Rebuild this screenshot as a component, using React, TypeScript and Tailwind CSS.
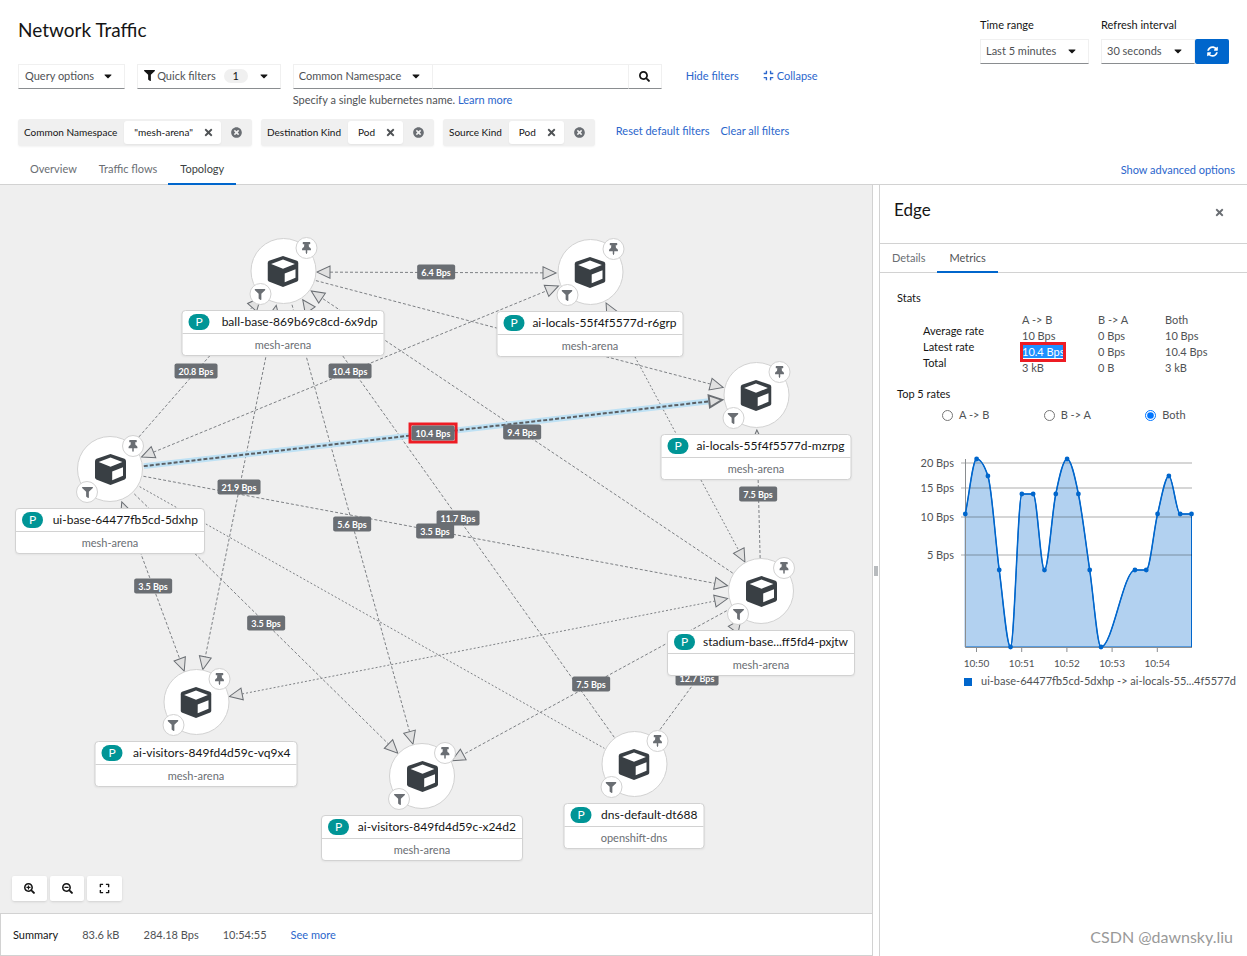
import { useState } from 'react';
import type { ReactNode } from 'react';
import {
  FaCaretDown,
  FaCompress,
  FaExpand,
  FaFilter,
  FaSearch,
  FaSearchMinus,
  FaSearchPlus,
  FaSyncAlt,
  FaThumbtack,
  FaTimes,
  FaTimesCircle,
} from 'react-icons/fa';

interface PodNode {
  id: string;
  name: string;
  namespace: string;
  x: number;
  y: number;
  width: number;
}

interface Edge {
  from: string;
  to: string;
  label?: string;
  both?: boolean;
  noArrow?: boolean;
  dotted?: boolean;
  selected?: boolean;
}

const nodes: PodNode[] = [
  { id: 'ball', name: 'ball-base-869b69c8cd-6x9dp', namespace: 'mesh-arena', x: 283, y: 87, width: 203 },
  { id: 'r6grp', name: 'ai-locals-55f4f5577d-r6grp', namespace: 'mesh-arena', x: 590, y: 88, width: 187 },
  { id: 'mzrpg', name: 'ai-locals-55f4f5577d-mzrpg', namespace: 'mesh-arena', x: 756, y: 211, width: 191 },
  { id: 'ui', name: 'ui-base-64477fb5cd-5dxhp', namespace: 'mesh-arena', x: 110, y: 285, width: 190 },
  { id: 'stadium', name: 'stadium-base...ff5fd4-pxjtw', namespace: 'mesh-arena', x: 761, y: 407, width: 188 },
  { id: 'vq9x4', name: 'ai-visitors-849fd4d59c-vq9x4', namespace: 'mesh-arena', x: 196, y: 518, width: 203 },
  { id: 'x24d2', name: 'ai-visitors-849fd4d59c-x24d2', namespace: 'mesh-arena', x: 422, y: 592, width: 202 },
  { id: 'dns', name: 'dns-default-dt688', namespace: 'openshift-dns', x: 634, y: 580, width: 141 },
];

const edges: Edge[] = [
  { from: 'ball', to: 'r6grp', label: '6.4 Bps', both: true },
  { from: 'ball', to: 'mzrpg' },
  { from: 'ui', to: 'r6grp', label: '10.4 Bps', both: true },
  { from: 'ui', to: 'ball', label: '20.8 Bps' },
  { from: 'ball', to: 'vq9x4', label: '21.9 Bps', both: true },
  { from: 'ball', to: 'x24d2', label: '5.6 Bps' },
  { from: 'stadium', to: 'ball', label: '9.4 Bps' },
  { from: 'r6grp', to: 'stadium', both: true, dotted: true },
  { from: 'stadium', to: 'mzrpg', label: '7.5 Bps' },
  { from: 'ui', to: 'stadium', label: '3.5 Bps' },
  { from: 'dns', to: 'ball', label: '11.7 Bps' },
  { from: 'vq9x4', to: 'stadium', both: true, dotted: true },
  { from: 'ui', to: 'x24d2', label: '3.5 Bps' },
  { from: 'ui', to: 'vq9x4', label: '3.5 Bps', both: true },
  { from: 'stadium', to: 'x24d2', label: '7.5 Bps' },
  { from: 'dns', to: 'stadium', label: '12.7 Bps' },
  { from: 'ui', to: 'dns', noArrow: true, dotted: true },
  { from: 'ui', to: 'mzrpg', label: '10.4 Bps', selected: true },
];

const NODE_RADIUS = 34;
const ARROW_LENGTH = 13;

const findNode = (id: string) => nodes.find((n) => n.id === id)!;

function Arrow({ x, y, angle, selected }: { x: number; y: number; angle: number; selected?: boolean }) {
  return (
    <path
      d={`M0 0L-${ARROW_LENGTH} -6V6Z`}
      transform={`translate(${x} ${y}) rotate(${angle})`}
      fill="#e0e0e0"
      stroke="#6a6e73"
      strokeWidth={selected ? 2 : 1}
    />
  );
}

function EdgeLine({ edge }: { edge: Edge }) {
  const a = findNode(edge.from);
  const b = findNode(edge.to);
  const length = Math.hypot(b.x - a.x, b.y - a.y);
  const ux = (b.x - a.x) / length;
  const uy = (b.y - a.y) / length;
  const angle = (Math.atan2(uy, ux) * 180) / Math.PI;
  const startGap = NODE_RADIUS + (edge.both ? ARROW_LENGTH : 0);
  const endGap = NODE_RADIUS + (edge.noArrow ? 0 : ARROW_LENGTH);
  const line = {
    x1: a.x + ux * startGap,
    y1: a.y + uy * startGap,
    x2: b.x - ux * endGap,
    y2: b.y - uy * endGap,
  };

  return (
    <g>
      {edge.selected && <line {...line} stroke="#bee1f4" strokeWidth={6} />}
      <line
        {...line}
        stroke={edge.selected ? '#5b5f63' : '#7d8084'}
        strokeWidth={edge.selected ? 2 : 1}
        strokeDasharray={edge.dotted ? '2 2' : edge.selected ? '4 2' : '3 2'}
      />
      {!edge.noArrow && (
        <Arrow x={b.x - ux * NODE_RADIUS} y={b.y - uy * NODE_RADIUS} angle={angle} selected={edge.selected} />
      )}
      {edge.both && <Arrow x={a.x + ux * NODE_RADIUS} y={a.y + uy * NODE_RADIUS} angle={angle + 180} />}
    </g>
  );
}

function EdgeLabel({ edge }: { edge: Edge }) {
  const a = findNode(edge.from);
  const b = findNode(edge.to);
  return (
    <div
      className={`absolute -translate-x-1/2 -translate-y-1/2 ${edge.selected ? 'border-3 border-[#ed1c24]' : ''}`}
      style={{ left: Math.floor((a.x + b.x) / 2), top: Math.floor((a.y + b.y) / 2) }}
    >
      <div className="rounded-[2px] bg-[#6a6e73] px-1 text-[9px] leading-[15px] font-bold whitespace-nowrap text-white">
        {edge.label}
      </div>
    </div>
  );
}

function CubeIcon() {
  return (
    <svg width="31" height="31" viewBox="0 0 31 31" aria-hidden="true">
      <path
        d="M15.5 0 29.5 4.8Q31 5.5 31 7.2V23.3Q31 24.8 29.7 25.5L15.5 31 1.3 25.5Q0 24.8 0 23.3V7.2Q0 5.5 1.5 4.8Z"
        fill="#393f44"
      />
      <path d="M15.5 3.6 27.4 8 15.5 12.8 3.6 8Z" fill="#fff" />
      <path d="M17.2 17.4 28 13.2V21.8L17.2 26.2Z" fill="#fff" />
    </svg>
  );
}

function PodItem({ node }: { node: PodNode }) {
  return (
    <div
      className="absolute flex -translate-x-1/2 flex-col items-center gap-1.5"
      style={{ left: node.x, top: node.y - 34, width: node.width }}
    >
      <div className="relative flex size-[66px] items-center justify-center rounded-full border border-[#d2d2d2] bg-white">
        <CubeIcon />
        <span className="absolute -top-[2px] -right-[2px] flex size-[22px] items-center justify-center rounded-full border border-[#d2d2d2] bg-white">
          <FaThumbtack size={12} color="#6a6e73" />
        </span>
        <span className="absolute -bottom-[2px] -left-[2px] flex size-[22px] items-center justify-center rounded-full border border-[#d2d2d2] bg-white">
          <FaFilter size={11} color="#6a6e73" />
        </span>
      </div>
      <div className="w-full rounded-[4px] border border-[#d2d2d2] bg-white text-center shadow-xs">
        <div className="flex h-[23px] items-center justify-between border-b border-[#d2d2d2] pr-1.5 pl-1.5">
          <span className="h-4 w-[21px] rounded-full bg-[#009596] text-[12px] leading-4 text-white">P</span>
          <span className="text-[12px] whitespace-nowrap text-[#151515]">{node.name}</span>
        </div>
        <div className="leading-[21px] text-[#6a6e73]">{node.namespace}</div>
      </div>
    </div>
  );
}

function MenuButton({ children }: { children: ReactNode }) {
  return (
    <button
      type="button"
      className="flex h-[25px] items-center border border-[#f0f0f0] border-b-[#8a8d90] bg-white px-1.5 pb-0.5 text-[#4f5255]"
    >
      {children}
    </button>
  );
}

function SelectBox({ id, options, width, label }: { id: string; options: string[]; width: string; label?: string }) {
  return (
    <div className={`relative ${width}`}>
      <select
        id={id}
        aria-label={label}
        className="h-[25px] w-full appearance-none border border-[#f0f0f0] border-b-[#8a8d90] bg-white pb-0.5 pl-[5px] text-[#4f5255]"
      >
        {options.map((o) => (
          <option key={o}>{o}</option>
        ))}
      </select>
      <FaCaretDown size={12} className="pointer-events-none absolute top-1.5 right-[11px] text-[#151515]" />
    </div>
  );
}

function FilterChip({ category, value }: { category: string; value: string }) {
  return (
    <div className="flex h-[27px] items-center rounded-[3px] bg-[#f0f0f0] pl-1.5 text-[10px] text-[#151515] shadow-xs">
      <span className="pb-0.5">{category}</span>
      <span className="ml-[7px] flex h-[23px] items-center gap-2.5 rounded-[3px] bg-white pr-[7px] pl-2.5 shadow-xs">
        <span className="pb-0.5">{value}</span>
        <button type="button" aria-label={`Remove ${value}`}>
          <FaTimes size={11} color="#4f5255" />
        </button>
      </span>
      <button type="button" aria-label={`Clear ${category}`} className="px-2.5">
        <FaTimesCircle size={11} color="#6a6e73" />
      </button>
    </div>
  );
}

// slot index (15s steps) and y position of each sample
const samples: [number, number][] = [
  [0, 64], [1, 9], [2, 26], [3, 120], [4, 197], [5, 44], [6, 44], [7, 120], [8, 44], [9, 9],
  [10, 44], [11, 120], [12, 197], [15, 120], [16, 120], [17, 64], [18, 26], [19, 64], [20, 64],
];
const points = samples.map(([slot, y]) => [85.3 + slot * 11.31, y]);

// monotone cubic interpolation
function curvePath(pts: number[][]) {
  const slopes = pts.slice(1).map((p, i) => (p[1] - pts[i][1]) / (p[0] - pts[i][0]));
  const tangents = pts.map((p, i) => {
    if (i === 0) return slopes[0];
    if (i === pts.length - 1) return slopes[slopes.length - 1];
    const s0 = slopes[i - 1];
    const s1 = slopes[i];
    if (s0 * s1 <= 0) return 0;
    const h0 = p[0] - pts[i - 1][0];
    const h1 = pts[i + 1][0] - p[0];
    const mid = (s0 * h1 + s1 * h0) / (h0 + h1);
    return Math.sign(s0) * Math.min(Math.abs(s0) * 2, Math.abs(s1) * 2, Math.abs(mid));
  });
  let d = `M${pts[0][0]} ${pts[0][1]}`;
  for (let i = 1; i < pts.length; i++) {
    const [x0, y0] = pts[i - 1];
    const [x1, y1] = pts[i];
    const dx = (x1 - x0) / 3;
    d += `C${x0 + dx} ${y0 + dx * tangents[i - 1]} ${x1 - dx} ${y1 - dx * tangents[i]} ${x1} ${y1}`;
  }
  return d;
}

const yTicks = [
  { y: 13, label: '20 Bps' },
  { y: 38, label: '15 Bps' },
  { y: 67, label: '10 Bps' },
  { y: 105, label: '5 Bps' },
];
const xTicks = ['10:50', '10:51', '10:52', '10:53', '10:54'];

function RatesChart() {
  return (
    <svg viewBox="0 0 367 240" className="w-full" role="img" aria-label="Top 5 rates">
      <path d={`${curvePath(points)}V197H85.3Z`} fill="#06c" fillOpacity={0.3} stroke="#06c" strokeWidth={1} />
      {yTicks.map((t) => (
        <g key={t.label}>
          <line x1={81} x2={312} y1={t.y} y2={t.y} stroke="#151515" strokeOpacity={0.35} />
          <text x={74} y={t.y + 4} textAnchor="end" fontSize={11} fill="#4f5255">
            {t.label}
          </text>
        </g>
      ))}
      <path d="M85.5 9V197.5H312" fill="none" stroke="#8a8d90" />
      <path d={curvePath(points)} fill="none" stroke="#06c" strokeWidth={1.5} />
      {points.map(([x, y]) => (
        <circle key={x} cx={x} cy={y} r={2.4} fill="#06c" />
      ))}
      {xTicks.map((t, i) => (
        <g key={t}>
          <line x1={96.5 + i * 45.2} x2={96.5 + i * 45.2} y1={198} y2={202} stroke="#8a8d90" />
          <text x={96.5 + i * 45.2} y={217} textAnchor="middle" fontSize={10} fill="#4f5255">
            {t}
          </text>
        </g>
      ))}
      <rect x={84} y={228} width={8} height={8} fill="#06c" />
      <text x={101} y={235} fontSize={11} fill="#4f5255">
        {'ui-base-64477fb5cd-5dxhp -> ai-locals-55...4f5577d'}
      </text>
    </svg>
  );
}

const stats = [
  { name: 'Average rate', values: ['10 Bps', '0 Bps', '10 Bps'] },
  { name: 'Latest rate', values: ['10.4 Bps', '0 Bps', '10.4 Bps'], marked: true },
  { name: 'Total', values: ['3 kB', '0 B', '3 kB'] },
];
const directions = ['A -> B', 'B -> A', 'Both'];

function EdgePanel() {
  const [direction, setDirection] = useState('Both');

  return (
    <aside className="w-[368px] shrink-0 border-l border-[#d2d2d2] text-[#4f5255]">
      <div className="flex h-[59px] items-start justify-between border-b border-[#d2d2d2] pt-[15px] pr-[22px] pl-3.5">
        <h2 className="text-[17px] leading-5 text-[#151515]">Edge</h2>
        <button type="button" aria-label="Close" className="pt-[7px]">
          <FaTimes size={11} color="#6a6e73" />
        </button>
      </div>
      <nav className="flex h-[29px] border-b border-[#d2d2d2]">
        <button type="button" className="-mb-px border-b-2 border-transparent px-3 text-[#6a6e73]">
          Details
        </button>
        <button type="button" className="-mb-px border-b-2 border-[#06c] px-3 text-[#4f5255]">
          Metrics
        </button>
      </nav>
      <div className="pt-4">
        <h3 className="pl-[17px] leading-[18px] text-[#151515]">Stats</h3>
        <table className="mt-[5px] ml-[43px] table-fixed text-left">
          <thead>
            <tr className="h-4">
              <td className="w-[99px]" />
              <th className="w-[76px] font-normal">{'A -> B'}</th>
              <th className="w-[67px] font-normal">{'B -> A'}</th>
              <th className="font-normal">Both</th>
            </tr>
          </thead>
          <tbody>
            {stats.map((row) => (
              <tr key={row.name} className="h-4 leading-4">
                <th scope="row" className="align-top leading-[6px] font-normal text-[#151515]">
                  {row.name}
                </th>
                {row.values.map((v, i) => (
                  <td key={i} className="relative whitespace-nowrap">
                    {row.marked && i === 0 ? (
                      <>
                        <span className="bg-[#1e90ff] text-white">{v}</span>
                        <span className="absolute -top-0.5 -left-0.5 h-5 w-[46px] border-3 border-[#ed1c24]" />
                      </>
                    ) : (
                      v
                    )}
                  </td>
                ))}
              </tr>
            ))}
          </tbody>
        </table>
        <h3 className="mt-[9px] pl-[17px] leading-[18px] text-[#151515]">Top 5 rates</h3>
        <div className="mt-1 ml-[62px] flex">
          {directions.map((d) => (
            <label key={d} className="flex h-4 w-[102px] items-center gap-1.5">
              <input
                type="radio"
                name="direction"
                className="size-[11px]"
                checked={direction === d}
                onChange={() => setDirection(d)}
              />
              {d}
            </label>
          ))}
        </div>
        <div className="mt-[27px]">
          <RatesChart />
        </div>
      </div>
    </aside>
  );
}

function Topology() {
  return (
    <div className="relative min-h-[700px] flex-1 overflow-hidden bg-[#efefef]">
      <svg className="absolute inset-0 size-full" aria-hidden="true">
        {edges.map((e) => (
          <EdgeLine key={`${e.from}-${e.to}`} edge={e} />
        ))}
      </svg>
      {edges
        .filter((e) => e.label)
        .map((e) => (
          <EdgeLabel key={`${e.from}-${e.to}`} edge={e} />
        ))}
      {nodes.map((n) => (
        <PodItem key={n.id} node={n} />
      ))}
      <div className="absolute bottom-3 left-3 flex gap-[3px] text-[#151515]">
        <button type="button" aria-label="Zoom in" className="flex h-[25px] w-[35px] items-center justify-center rounded-[2px] bg-white shadow-sm">
          <FaSearchPlus size={11} />
        </button>
        <button type="button" aria-label="Zoom out" className="flex h-[25px] w-[34px] items-center justify-center rounded-[2px] bg-white shadow-sm">
          <FaSearchMinus size={11} />
        </button>
        <button type="button" aria-label="Fit to screen" className="flex h-[25px] w-[35px] items-center justify-center rounded-[2px] bg-white shadow-sm">
          <FaExpand size={11} />
        </button>
      </div>
    </div>
  );
}

export default function App() {
  return (
    <main className="relative flex min-h-screen flex-col bg-white font-['Lato',sans-serif] text-[11px] leading-4 text-[#151515]">
      <header className="border-b border-[#d2d2d2] px-[18px]">
        <div className="flex h-16 items-start justify-between pt-[17px]">
          <h1 className="text-[19px] leading-[26px]">Network Traffic</h1>
          <div className="flex items-end gap-3">
            <div className="flex flex-col gap-1.5">
              <label htmlFor="time-range">Time range</label>
              <SelectBox id="time-range" width="w-[109px]" options={['Last 5 minutes', 'Last 15 minutes', 'Last 1 hour']} />
            </div>
            <div className="flex flex-col gap-1.5">
              <label htmlFor="refresh">Refresh interval</label>
              <div className="flex">
                <SelectBox id="refresh" width="w-[94px]" options={['30 seconds', '1 minute', 'Refresh off']} />
                <button type="button" aria-label="Refresh" className="flex h-[25px] w-[34px] items-center justify-center rounded-[2px] bg-[#06c] text-white">
                  <FaSyncAlt size={11} />
                </button>
              </div>
            </div>
          </div>
        </div>

        <div className="flex items-start gap-3">
          <MenuButton>
            Query options <FaCaretDown size={12} className="mr-1 ml-2 text-[#151515]" />
          </MenuButton>
          <MenuButton>
            <FaFilter size={11} className="mr-0.5 text-[#151515]" />
            Quick filters
            <span className="ml-2 h-3.5 w-6 rounded-full bg-[#f0f0f0] leading-3.5 text-[#151515]">1</span>
            <FaCaretDown size={12} className="mr-1 ml-2.5 text-[#151515]" />
          </MenuButton>
          <div>
            <div className="flex">
              <SelectBox id="filter-column" width="w-[140px]" label="Filter column" options={['Common Namespace', 'Kind', 'Owner']} />
              <input
                type="text"
                aria-label="Filter value"
                className="h-[25px] w-[196px] border border-l-0 border-[#f0f0f0] border-b-[#8a8d90] px-2 outline-none"
              />
              <button type="button" aria-label="Search" className="flex h-[25px] w-[33px] items-center justify-center border border-l-0 border-[#f0f0f0] border-b-[#8a8d90]">
                <FaSearch size={11} />
              </button>
            </div>
            <p className="mt-[3px] text-[#4f5255]">
              Specify a single kubernetes name.{' '}
              <a href="#learn" className="text-[#2b66cc]">
                Learn more
              </a>
            </p>
          </div>
          <div className="ml-3 flex h-[23px] items-center gap-6 text-[#2b66cc]">
            <button type="button">Hide filters</button>
            <button type="button" className="flex items-center gap-[3px]">
              <FaCompress size={11} />
              Collapse
            </button>
          </div>
        </div>

        <div className="mt-[11px] flex items-center gap-[9px]">
          <FilterChip category="Common Namespace" value={'"mesh-arena"'} />
          <FilterChip category="Destination Kind" value="Pod" />
          <FilterChip category="Source Kind" value="Pod" />
          <button type="button" className="ml-3 pb-1 text-[#2b66cc]">
            Reset default filters
          </button>
          <button type="button" className="ml-0.5 pb-1 text-[#2b66cc]">
            Clear all filters
          </button>
        </div>

        <div className="mt-[9px] flex h-[29px] items-stretch justify-between">
          <nav className="flex text-[#6a6e73]">
            <button type="button" className="-mb-px border-b-2 border-transparent pr-[11px] pl-3">
              Overview
            </button>
            <button type="button" className="-mb-px border-b-2 border-transparent px-[11px]">
              Traffic flows
            </button>
            <button type="button" className="-mb-px border-b-2 border-[#06c] px-3 text-[#3c3f42]">
              Topology
            </button>
          </nav>
          <button type="button" className="-mr-1.5 text-[#2b66cc]">
            Show advanced options
          </button>
        </div>
      </header>

      <div className="flex flex-1">
        <div className="flex min-w-0 flex-1 flex-col border-r border-[#d2d2d2]">
          <Topology />
          <footer className="flex h-[43px] items-center gap-6 border border-r-0 border-[#d2d2d2] pl-3 text-[#4f5255]">
            <span className="text-[#151515]">Summary</span>
            <span>83.6 kB</span>
            <span>284.18 Bps</span>
            <span>10:54:55</span>
            <a href="#more" className="text-[#2b66cc]">
              See more
            </a>
          </footer>
        </div>
        <div className="flex w-1.5 items-center justify-center">
          <span className="h-2.5 w-1 bg-[#b8bbbe]" />
        </div>
        <EdgePanel />
      </div>

      <div className="pointer-events-none absolute right-3.5 bottom-2 text-[16px] leading-[22px] text-[#999]">
        CSDN @dawnsky.liu
      </div>
    </main>
  );
}
